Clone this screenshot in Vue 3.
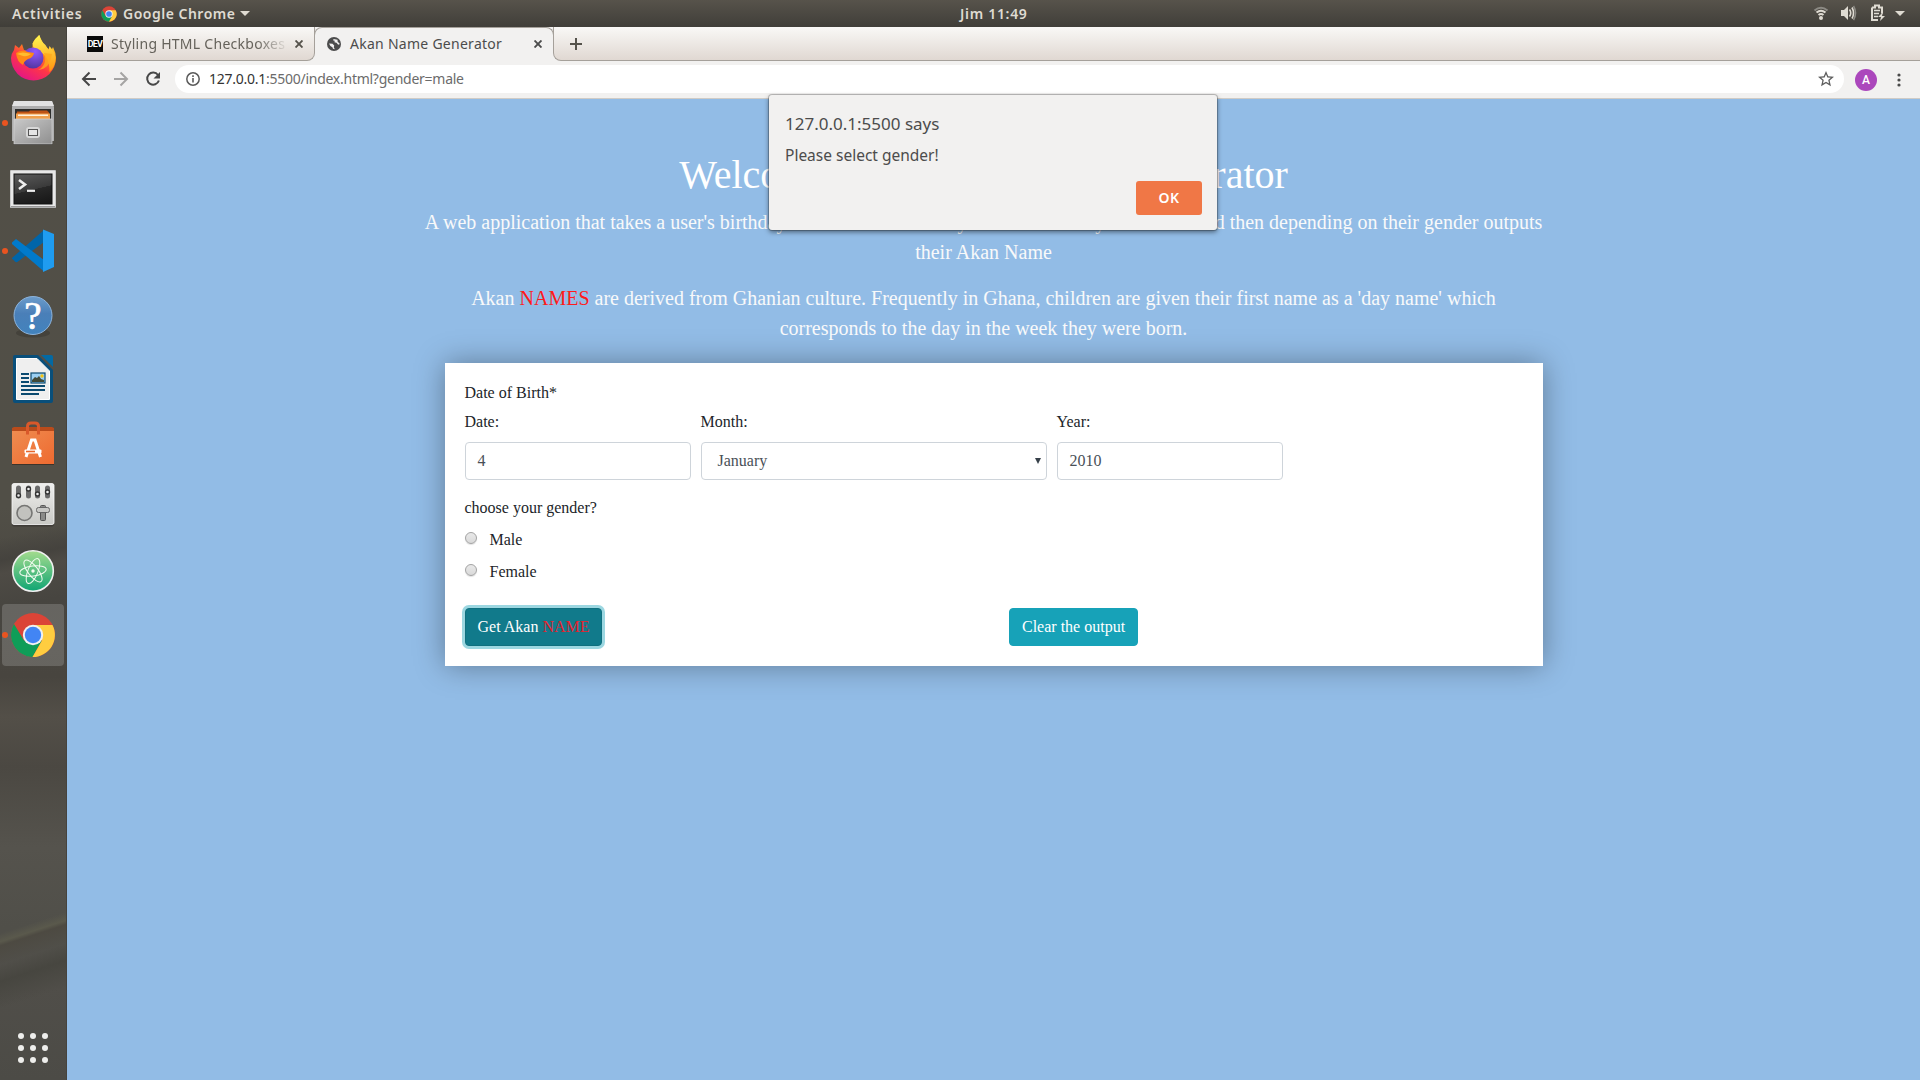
<script setup>
import { ref } from 'vue'

const day = ref('4')
const month = ref('January')
const year = ref('2010')
const genders = ['Male', 'Female']
const dots = [21, 33, 45]
</script>

<template>
  <div class="desktop">
    <header class="topbar">
      <span class="activities">Activities</span>
      <svg class="app-logo" width="16" height="16" viewBox="-24 -24 48 48">
        <circle r="23" fill="#db4437" />
        <path d="M-20-11.500A23 23 0 0 0 0 23L10 5.800-10 5.800Z" fill="#0f9d58" />
        <path d="M0 23A23 23 0 0 0 20-11.500L0-11.500 10 5.800Z" fill="#ffcd40" />
        <circle r="11" fill="#f1f1f1" /><circle r="8.500" fill="#4285f4" />
      </svg>
      <span class="app-name">Google Chrome</span>
      <i class="caret"></i>
      <span class="clock">Jim 11:49</span>
      <svg class="tray" width="100" height="27" viewBox="1812 0 100 27">
        <g fill="none" stroke-width="2">
          <path d="M1814.500 10.500Q1821 5 1827.500 10.500" stroke="#8c8a84" />
          <path d="M1816.500 12.500Q1821 9 1825.500 12.500M1818.500 15Q1821 13 1823.500 15" stroke="#dfdbd2" />
        </g>
        <circle cx="1821" cy="18" r="2" fill="#dfdbd2" />
        <path d="M1841 10h3l4-4v14l-4-4h-3z" fill="#dfdbd2" />
        <path d="M1849.500 9.500q2.500 3.500 0 7M1852 7.500q3 5.500 0 11" fill="none" stroke="#dfdbd2" stroke-width="1.600" />
        <path d="M1853.500 6q4 7 0 14" fill="none" stroke="#8c8a84" stroke-width="1.600" />
        <path d="M1872 7.500h3v-2h4v2h3v6M1878 20h-6v-12.500" fill="none" stroke="#dfdbd2" stroke-width="2" />
        <path d="M1874 10.500h6M1874 13.500h5M1874 16.500h4" stroke="#dfdbd2" stroke-width="1.500" />
        <path d="M1883 12l-5 5h3l-1 4 5-5h-3z" fill="#dfdbd2" />
        <path d="M1895 11h10l-5 5z" fill="#dfdbd2" />
      </svg>
    </header>

    <div class="workspace">
      <aside class="dock">
        <!-- Firefox -->
        <div class="slot">
          <svg viewBox="0 0 66 64">
            <defs>
              <linearGradient id="ffBody" x1=".9" y1="0" x2=".3" y2="1">
                <stop offset="0" stop-color="#fff44f" /><stop offset=".35" stop-color="#ff980e" />
                <stop offset=".65" stop-color="#ff3647" /><stop offset="1" stop-color="#e31587" />
              </linearGradient>
              <linearGradient id="ffFlame" x1=".5" y1="0" x2=".6" y2="1">
                <stop offset="0" stop-color="#fff44f" /><stop offset=".55" stop-color="#ffbd2f" /><stop offset="1" stop-color="#ff980e" />
              </linearGradient>
              <radialGradient id="ffGlobe" cx=".6" cy=".2" r=".9">
                <stop offset="0" stop-color="#9059ff" /><stop offset="1" stop-color="#4b3296" />
              </radialGradient>
            </defs>
            <path d="M14 23l1-5 4 3 3-4 2 6 8 1 1-9 6-7 5 10 7 6 2-4q3 6 3 11A22.500 22.500 0 0 1 11 31q0-4 3-8z" fill="url(#ffBody)" />
            <path d="M33 16q2-5 6.500-8 1 6 6 10l3 5 1-4q5 6 6 11 0 10-6 15 0-17-10-20-7-2-7-9z" fill="url(#ffFlame)" />
            <circle cx="33" cy="31" r="10.500" fill="url(#ffGlobe)" />
            <path d="M16 26q6-4 12-1l6 1q-1 5-6 6-4 2-5 6-6-3-7-12z" fill="#ff8a16" />
            <path d="M17 27q5-3 14 0-4 3-8 2z" fill="#ffbd2f" />
            <path d="M44 26q4 12-6 17 12-1 14-16z" fill="#ffa91c" opacity=".8" />
          </svg>
        </div>
        <!-- Files -->
        <div class="slot">
          <i class="running"></i>
          <svg viewBox="0 0 66 64">
            <defs><linearGradient id="cab" x1="0" y1="0" x2="1" y2="1"><stop offset="0" stop-color="#c9c9c9" /><stop offset="1" stop-color="#8f8f8f" /></linearGradient></defs>
            <path d="M14 10h38l2 6v34h-42v-34z" fill="#aeaeae" />
            <path d="M14 10h38l2 5h-42z" fill="#e2e2e2" />
            <path d="M15 18h36v10h-36z" fill="#2e2e2c" />
            <path d="M17 20.500h12l1-1h17l2 2v7h-33z" fill="#bf5314" />
            <path d="M16 22.500h34v6h-34z" fill="#f0a04c" /><path d="M18 23.500h30v1.500h-30z" fill="#fff1dc" />
            <path d="M14 28h38v25h-38z" fill="url(#cab)" stroke="#d3d3d3" stroke-width=".7" />
            <path d="M14 53.500h38" stroke="#444" opacity=".6" />
            <rect x="27" y="37" width="12" height="9" rx="2" fill="#b4b4b4" stroke="#d8d8d8" stroke-width="2" />
            <rect x="28.500" y="38.500" width="9" height="6" fill="#e4e4e4" stroke="#555" />
          </svg>
        </div>
        <!-- Terminal -->
        <div class="slot">
          <svg viewBox="0 0 66 64">
            <defs><linearGradient id="term" x1=".4" y1="0" x2=".7" y2="1"><stop offset="0" stop-color="#555" /><stop offset=".5" stop-color="#3a3a3a" /><stop offset=".51" stop-color="#282828" /><stop offset="1" stop-color="#181818" /></linearGradient></defs>
            <rect x="10" y="15" width="46" height="38" rx="1" fill="#c9c9c9" />
            <rect x="11" y="16" width="44" height="35" fill="#e8e8e8" /><path d="M11 51h44v1.500h-44z" fill="#999" />
            <rect x="14" y="19" width="38" height="30" fill="url(#term)" stroke="#111" />
            <path d="M19 25l6 4.500-6 4.500" fill="none" stroke="#eee" stroke-width="2.600" />
            <path d="M27 35.800h8" stroke="#eee" stroke-width="2.200" />
          </svg>
        </div>
        <!-- Visual Studio Code -->
        <div class="slot">
          <i class="running"></i>
          <svg viewBox="0 0 66 64">
            <path d="M12 39.500l3.500 3.500 1.500.2L44 23V11L12 39z" fill="#0065a9" />
            <path d="M12 23.500l4-3.500L44 41v11.500L12 25z" fill="#007acc" />
            <path d="M43 10.500l11 4.500v33l-11 5z" fill="#1f9cf0" />
          </svg>
        </div>
        <!-- Help -->
        <div class="slot">
          <svg viewBox="0 0 66 64">
            <defs><linearGradient id="help" x1="0" y1="0" x2="0" y2="1"><stop offset="0" stop-color="#6c9ccb" /><stop offset=".45" stop-color="#4a7fb8" /><stop offset="1" stop-color="#4283bd" /></linearGradient></defs>
            <ellipse cx="33" cy="50" rx="17" ry="4.500" fill="#37352f" opacity=".5" />
            <circle cx="33" cy="32.500" r="19" fill="url(#help)" stroke="#8db4dc" stroke-width="1" />
            <text x="33" y="45.500" text-anchor="middle" class="question">?</text>
          </svg>
        </div>
        <!-- LibreOffice Writer -->
        <div class="slot">
          <svg viewBox="0 0 66 64">
            <path d="M15 8h23l15 15v31q0 2-2 2H15q-2 0-2-2V10q0-2 2-2z" fill="#094f7b" />
            <path d="M41 8h10q2 0 2 2v10z" fill="#0369a3" />
            <path d="M16.500 11.500h20.500l12.500 12.500v28.500h-33z" fill="#efefef" stroke="#fff" />
            <path d="M21 27h8M21 31h8M21 35h8M21 39h24M21 43h24M21 47h18" stroke="#0b4a70" stroke-width="2" />
            <rect x="31" y="26" width="14" height="10" fill="#9bd0f3" stroke="#0b4a70" stroke-width="1.200" />
            <circle cx="42" cy="29" r="1.700" fill="#f5c211" /><path d="M32 35v-2l3-3 2 1 2-2 2 3 3 1v2z" fill="#434a38" />
          </svg>
        </div>
        <!-- Ubuntu Software -->
        <div class="slot">
          <svg viewBox="0 0 66 64">
            <defs><linearGradient id="bag" x1="0" y1="0" x2="1" y2="1"><stop offset="0" stop-color="#ef8c50" /><stop offset="1" stop-color="#ee6a30" /></linearGradient></defs>
            <path d="M12 17l2-1h38l2 1v3h-42z" fill="#b94b1b" />
            <path d="M12 20h42v33h-42z" fill="url(#bag)" /><path d="M12 53.500h42" stroke="#3d332a" />
            <path d="M27.500 23.500v-8q0-3.500 3.500-3.500h4q3.500 0 3.500 3.500v8" fill="none" stroke="#d9582a" stroke-width="3" />
            <path d="M26 46l5.500-17h3.500l5.500 17" fill="none" stroke="#fff" stroke-width="3" />
            <rect x="24.500" y="38.500" width="17" height="4" rx="1" fill="#fff" /><path d="M26 40.500h9" stroke="#e8662b" stroke-width="1.600" />
          </svg>
        </div>
        <!-- Tweaks -->
        <div class="slot">
          <svg viewBox="0 0 66 64">
            <defs><linearGradient id="panel" x1="0" y1="0" x2="0" y2="1"><stop offset="0" stop-color="#efefed" /><stop offset="1" stop-color="#c9c9c5" /></linearGradient></defs>
            <rect x="12" y="9.500" width="42" height="42" rx="2" fill="#33312d" opacity=".6" />
            <rect x="12" y="8.500" width="42" height="41" rx="2" fill="url(#panel)" stroke="#fafafa" stroke-width=".8" />
            <g fill="#6b6b6b"><rect x="16" y="10.500" width="5" height="13" rx="2.500" /><rect x="26" y="10.500" width="5" height="13" rx="2.500" /><rect x="35" y="10.500" width="5" height="13" rx="2.500" /><rect x="45" y="10.500" width="5" height="13" rx="2.500" /></g>
            <g fill="#eee" stroke="#333" stroke-width="1.400"><circle cx="18.500" cy="20.500" r="2" /><circle cx="28.500" cy="14" r="2" /><circle cx="37.500" cy="19" r="2" /><circle cx="47.500" cy="17" r="2" /></g>
            <circle cx="24.500" cy="38" r="7.500" fill="#c2c2be" stroke="#757573" stroke-width="1.600" />
            <rect x="40.500" y="30.500" width="5" height="15" rx="1" fill="#8a8a88" stroke="#555" />
            <rect x="36.500" y="32.500" width="13" height="5" rx="2" fill="#c8c8c5" stroke="#666" />
          </svg>
        </div>
        <!-- Atom -->
        <div class="slot">
          <svg viewBox="0 0 66 64">
            <defs><linearGradient id="atom" x1="0" y1="0" x2="0" y2="1"><stop offset="0" stop-color="#a5dc8e" /><stop offset="1" stop-color="#10a573" /></linearGradient></defs>
            <circle cx="33" cy="32" r="20.300" fill="url(#atom)" stroke="#f0f0f0" stroke-width="1.600" />
            <g fill="none" stroke="#f2fbf0" stroke-width="1">
              <ellipse cx="33" cy="32" rx="13.300" ry="5" transform="rotate(-8 33 32)" />
              <ellipse cx="33" cy="32" rx="13.300" ry="5" transform="rotate(52 33 32)" />
              <ellipse cx="33" cy="32" rx="13.300" ry="5" transform="rotate(112 33 32)" />
            </g>
            <circle cx="33" cy="32" r="1.700" fill="#f2fbf0" />
          </svg>
        </div>
        <!-- Chrome -->
        <div class="slot active">
          <i class="running"></i>
          <svg viewBox="0 0 66 64">
            <circle cx="33" cy="32" r="22" fill="#db4437" />
            <path d="M14 21A22 22 0 0 0 32.500 54L42 37.500 24 37.500Z" fill="#0f9d58" />
            <path d="M32.500 54A22 22 0 0 0 52.500 22H33L42 37.500Z" fill="#ffcd40" />
            <circle cx="33" cy="32" r="10.200" fill="#f1f1f1" /><circle cx="33" cy="32" r="8.200" fill="#4285f4" />
          </svg>
        </div>
        <svg class="apps-grid" width="66" height="48" viewBox="0 0 66 48">
          <template v-for="(y, r) in dots" :key="r">
            <circle v-for="x in dots" :key="x" :cx="x" :cy="y - 9" r="3" fill="#eeeeec" />
          </template>
        </svg>
      </aside>

      <section class="browser">
        <div class="tabs">
          <div class="tab tab-idle">
            <span class="dev">DEV</span>
            <span class="tab-title idle-title">Styling HTML Checkboxes</span>
            <svg class="close" width="8" height="8" viewBox="0 0 8 8"><path d="M.5.500l7 7M7.500.500l-7 7" stroke="#55524b" stroke-width="1.900" /></svg>
          </div>
          <div class="tab tab-active">
            <svg width="14" height="14" viewBox="0 0 14 14">
              <circle cx="7" cy="7" r="7" fill="#4c4c4c" />
              <path d="M2 6.500l3.500.3 1.700 1.700-.4 1.700 1 2-1.800-.4-.6-1.600-2-1.200zM6.500 2l-.3 1.500 1.500.3-.2 1.500 2 .4 1.500 1.800 1.200.3.300-1.600-1.800-1.200-.2-2.200z" fill="#f2f1f0" />
            </svg>
            <span class="tab-title active-title">Akan Name Generator</span>
            <svg class="close" width="8" height="8" viewBox="0 0 8 8"><path d="M.5.500l7 7M7.500.500l-7 7" stroke="#4c4c4c" stroke-width="1.900" /></svg>
          </div>
          <div class="tab-rest">
            <svg width="12" height="12" viewBox="0 0 12 12"><path d="M6 0v12M0 6h12" stroke="#55524b" stroke-width="2" /></svg>
          </div>
        </div>

        <div class="toolbar">
          <svg class="nav" width="108" height="37" viewBox="67 61 108 37">
            <g fill="none" stroke-width="2">
              <path d="M96 79H83.500M89.500 72.500L83 79l6.500 6.500" stroke="#474747" />
              <path d="M114 79h12.500M120.500 72.500L127 79l-6.500 6.500" stroke="#a5a4a3" />
              <path d="M158 75a6 6 0 1 0 .9 5.500" stroke="#474747" />
            </g>
            <path d="M160 72v6.500h-6.500z" fill="#474747" />
          </svg>
          <div class="omnibox">
            <svg width="14" height="14" viewBox="0 0 14 14"><circle cx="7" cy="7" r="6.200" fill="none" stroke="#5a5a5a" stroke-width="1.500" /><path d="M7 6v4.500M7 3.200v1.700" stroke="#5a5a5a" stroke-width="1.600" /></svg>
            <span class="url"><b>127.0.0.1</b>:5500/index.html?gender=male</span>
            <svg class="star" width="16" height="16" viewBox="2 2 20 20"><path fill="#5d5d5d" d="M22 9.240l-7.190-.62L12 2 9.190 8.630 2 9.240l5.460 4.730L5.820 21 12 17.270 18.180 21l-1.630-7.030L22 9.240zM12 15.400l-3.760 2.270 1-4.280-3.320-2.880 4.380-.38L12 6.100l1.710 4.040 4.380.38-3.320 2.880 1 4.280L12 15.400z" /></svg>
          </div>
          <span class="avatar">A</span>
          <svg class="menu" width="4" height="14" viewBox="0 0 4 14"><circle cx="2" cy="2" r="1.600" /><circle cx="2" cy="7" r="1.600" /><circle cx="2" cy="12" r="1.600" /></svg>
        </div>

        <main class="page">
          <div class="intro">
            <h1>Welcome to an Akan Name Generator</h1>
            <p>A web application that takes a user's birthday and calculates the day of the week they were born and then depending on their gender outputs<br>their Akan Name</p>
            <p>Akan <em>NAMES</em> are derived from Ghanian culture. Frequently in Ghana, children are given their first name as a 'day name' which<br>corresponds to the day in the week they were born.</p>
          </div>

          <form class="card" @submit.prevent>
            <div class="line">Date of Birth*</div>
            <div class="fields">
              <label class="field narrow">Date:<span class="control">{{ day }}</span></label>
              <label class="field wide">Month:<span class="control select">{{ month }}
                <svg width="6" height="6" viewBox="0 0 6 6"><path d="M0 0h6L3 6z" fill="#374049" /></svg></span></label>
              <label class="field narrow">Year:<span class="control">{{ year }}</span></label>
            </div>
            <div class="line ask">choose your gender?</div>
            <label v-for="g in genders" :key="g" class="radio"><i></i>{{ g }}</label>
            <div class="buttons">
              <div class="half"><button type="button" class="btn focused">Get Akan <em>NAME</em></button></div>
              <div class="half"><button type="button" class="btn">Clear the output</button></div>
            </div>
          </form>
        </main>

        <div class="dialog">
          <div class="dialog-title">127.0.0.1:5500 says</div>
          <div class="dialog-text">Please select gender!</div>
          <button type="button" class="ok">OK</button>
        </div>
      </section>
    </div>
  </div>
</template>

<style>
body { margin: 0; overflow: hidden; }
</style>

<style scoped>
* { box-sizing: border-box; }
.desktop { width: 1920px; height: 1080px; display: flex; flex-direction: column; overflow: hidden; font-family: "Noto Sans", sans-serif; }
svg { display: block; flex: none; }

.topbar { position: relative; height: 27px; flex: none; display: flex; align-items: center; padding-left: 12px; background: linear-gradient(#57534b, #403e39); color: #dfdbd2; font-size: 14px; line-height: 27px; white-space: nowrap; }
.activities { width: 89px; font-weight: 600; letter-spacing: .8px; }
.app-logo { margin-right: 6px; }
.app-name { width: 117px; font-weight: 600; letter-spacing: .5px; }
.caret { border: 5px solid transparent; border-top-color: #dfdbd2; border-bottom: 0; }
.clock { position: absolute; left: 960px; font-weight: 600; letter-spacing: .7px; }
.tray { margin-left: auto; margin-right: 8px; }

.workspace { flex: 1; display: flex; min-height: 0; }
.dock { width: 67px; flex: none; display: flex; flex-direction: column; border-right: 1px solid #46433d;
  background:
    linear-gradient(162deg, transparent 862px, #5a594c 870px, #4d4a42 874px, transparent 892px, #474640 908px, transparent 934px),
    linear-gradient(168deg, transparent 500px, #45433e 522px, #4e4b45 535px, #474540 570px, transparent 620px),
    linear-gradient(#524f47 0, #514f47 480px, #4b4842 560px, #48453f 650px, #534f48 690px, #4b4842 740px, #55534d 820px, #504f49 900px, #504e49 960px, #4c4b46 1053px); }
.slot { position: relative; width: 66px; height: 64px; flex: none; }
.slot svg { width: 66px; height: 64px; position: relative; }
.slot.active::before { content: ""; position: absolute; left: 2px; top: 1px; width: 62px; height: 62px; border-radius: 4px; background: rgba(255, 255, 255, .17); }
.running { position: absolute; z-index: 1; left: 2px; top: 29px; width: 6px; height: 6px; border-radius: 50%; background: #e95420; }
.question { font: 400 39px "Liberation Serif", serif; fill: #fff; stroke: #fff; stroke-width: .7px; }
.apps-grid { margin-top: auto; margin-bottom: 8px; }

.browser { position: relative; flex: 1; display: flex; flex-direction: column; min-width: 0; background: #f2f1f0; }
.tabs { height: 34px; flex: none; display: flex; background: #f2f1f0; color: #4c4c4c; }
.tab { display: flex; align-items: center; font-size: 14px; }
.tab-idle, .tab-rest { background: linear-gradient(#f9f8f6, #e0d8d2); border-bottom: 1px solid #a5a09a; }
.tab-idle { width: 248px; padding-left: 20px; border-right: 1px solid #a5a09a; border-bottom-right-radius: 8px; }
.tab-active { width: 240px; margin-left: -1px; padding: 6px 0 0 12px; border: 1px solid #a5a09a; border-width: 1px 1px 0 1px; border-radius: 8px 8px 0 0; margin-bottom: 8px; }
.tab-rest { flex: 1; margin-left: -1px; padding-left: 16px; display: flex; align-items: center; border-left: 1px solid #a5a09a; border-bottom-left-radius: 8px; }
.dev { width: 16px; height: 16px; background: #0a0a0a; color: #fff; font: 700 9px/16px Roboto, sans-serif; letter-spacing: -.8px; text-align: center; margin-right: 8px; overflow: hidden; }
.tab-title { white-space: nowrap; letter-spacing: .27px; }
.idle-title { width: 174px; overflow: hidden; color: #65625b; margin-right: 10px; -webkit-mask-image: linear-gradient(90deg, #000 145px, transparent 178px); mask-image: linear-gradient(90deg, #000 145px, transparent 178px); }
.active-title { width: 184px; margin-left: 9px; }

.toolbar { height: 38px; flex: none; display: flex; align-items: center; border-bottom: 1px solid #cfcbc6; }
.omnibox { width: 1669px; height: 28px; margin-top: -1px; display: flex; align-items: center; padding: 0 10px 0 11px; border-radius: 14px; background: #fff; color: #6b6b6b; font-size: 14px; }
.url { margin: -1px 0 0 9px; white-space: nowrap; letter-spacing: -.26px; }
.url b { font-weight: 400; color: #333; }
.star { margin-left: auto; }
.avatar { width: 22px; height: 22px; margin-left: 11px; border-radius: 50%; background: #ab47bc; color: #fff; font: 500 12px/22px Roboto, sans-serif; text-align: center; }
.menu { margin-left: 20px; fill: #4a4a4a; }

.page { flex: 1; background: #92bce6; padding-top: 52px; color: #212529; font: 16px/24px "Liberation Serif", serif; }
.intro { width: 1140px; margin: 0 0 0 346.500px; color: #fff; text-align: center; white-space: nowrap; }
.intro h1 { margin: 0 0 8px; font-size: 40px; font-weight: 400; line-height: 48px; }
.intro p { margin: 0 0 16px; font-size: 20px; line-height: 30px; color: #f8f9fa; display: flow-root; }
em { font-style: normal; color: #ff1a1a; }
.card { width: 1098px; height: 303px; margin: 20px 0 0 378px; padding: 18px 19.500px 0; background: #fff; box-shadow: 0 0 28px rgba(0, 0, 0, .35); color: #212529; }
.intro p:last-child { margin-bottom: 0; }
.fields { display: flex; gap: 10px; margin-top: 5px; }
.field { display: flex; flex-direction: column; gap: 8px; }
.narrow { width: 226px; }
.wide { width: 346px; }
.control { height: 38px; display: flex; align-items: center; padding: 0 12px; border: 1px solid #ced4da; border-radius: 4px; color: #495057; background: #fff; }
.select { justify-content: space-between; padding: 0 5px 0 16px; }
.ask { margin-top: 16px; }
.radio { display: flex; align-items: center; height: 24px; margin-top: 8px; }
.radio i { width: 12px; height: 12px; margin: -4px 13px 0 0; border: 1px solid #a3a3a3; border-radius: 50%; background: linear-gradient(#e9e9e9, #d9d9d9); box-shadow: 0 1px 1px rgba(0, 0, 0, .12); }
.buttons { display: flex; margin-top: 24px; }
.half { width: 544.500px; flex: none; }
.half:last-child { width: auto; }
.btn { display: block; height: 38px; padding: 0 12px; border: 1px solid #17a2b8; border-radius: 4px; background: #17a2b8; color: #fff; font: 16px/24px "Liberation Serif", serif; }
.btn.focused { background: #117a8b; border-color: #10707f; box-shadow: 0 0 0 3px rgba(58, 176, 195, .5); }
.btn em { color: #e8222e; }

.dialog { position: absolute; left: 702px; top: 68px; width: 448px; height: 135px; padding: 18px 16px; display: flex; flex-direction: column; border-radius: 3px; background: #f2f1f0; color: #4c4c4c; box-shadow: 0 0 0 1px rgba(0, 0, 0, .2), 0 2px 5px rgba(0, 0, 0, .5); white-space: nowrap; }
.dialog-title { font-size: 17px; line-height: 22px; }
.dialog-text { margin-top: 10px; font-size: 15.500px; line-height: 20px; }
.ok { position: absolute; right: 15px; bottom: 15px; width: 66px; height: 34px; padding: 0; border: 0; border-radius: 3px; background: #f07746; color: #fff; font: 600 14px/34px "Noto Sans", sans-serif; letter-spacing: .4px; }
</style>
